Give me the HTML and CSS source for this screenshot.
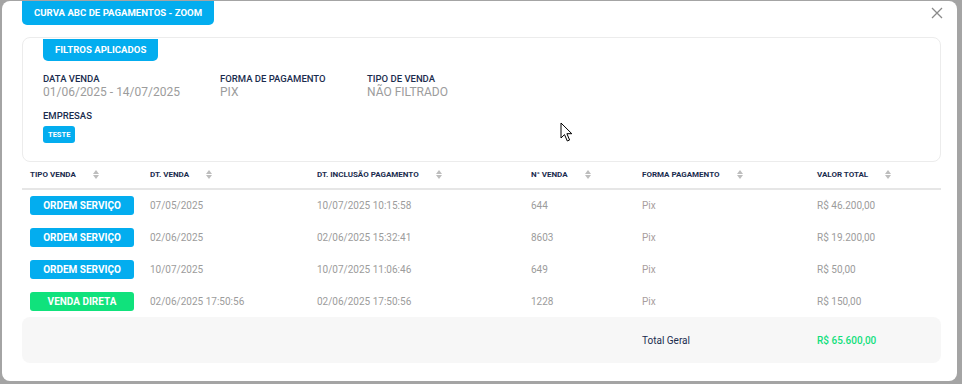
FILE: index.html
```html
<!DOCTYPE html>
<html lang="pt-BR">
<head>
    <meta charset="UTF-8">
    <meta name="viewport" content="width=device-width, initial-scale=1.0">
    <title>Curva ABC de Pagamentos - Zoom</title>
    <link rel="stylesheet" href="styles.css">
</head>
<body>
    <div class="modal">
        <div class="modal-tab">CURVA ABC DE PAGAMENTOS - ZOOM</div>
        <button class="close-btn" aria-label="Fechar">
            <svg width="12" height="12" viewBox="0 0 12 12"><path d="M1 1L11 11M11 1L1 11" stroke="#8a8a8a" stroke-width="1.3"/></svg>
        </button>

        <div class="filters">
            <div class="filters-tab">FILTROS APLICADOS</div>
            <div class="filter-row">
                <div class="filter">
                    <div class="filter-label">DATA VENDA</div>
                    <div class="filter-value">01/06/2025 - 14/07/2025</div>
                </div>
                <div class="filter">
                    <div class="filter-label">FORMA DE PAGAMENTO</div>
                    <div class="filter-value">PIX</div>
                </div>
                <div class="filter">
                    <div class="filter-label">TIPO DE VENDA</div>
                    <div class="filter-value">NÃO FILTRADO</div>
                </div>
            </div>
            <div class="filter">
                <div class="filter-label">EMPRESAS</div>
                <span class="chip">TESTE</span>
            </div>
        </div>

        <table class="grid">
            <colgroup>
                <col style="width:120px">
                <col style="width:167px">
                <col style="width:214px">
                <col style="width:111px">
                <col style="width:175px">
                <col style="width:132px">
            </colgroup>
            <thead>
                <tr>
                    <th>TIPO VENDA<span class="sort"></span></th>
                    <th>DT. VENDA<span class="sort"></span></th>
                    <th>DT. INCLUSÃO PAGAMENTO<span class="sort"></span></th>
                    <th>N° VENDA<span class="sort"></span></th>
                    <th>FORMA PAGAMENTO<span class="sort"></span></th>
                    <th>VALOR TOTAL<span class="sort"></span></th>
                </tr>
            </thead>
            <tbody>
                <tr>
                    <td><span class="badge badge-os">ORDEM SERVIÇO</span></td>
                    <td>07/05/2025</td>
                    <td>10/07/2025 10:15:58</td>
                    <td>644</td>
                    <td class="pix">Pix</td>
                    <td>R$ 46.200,00</td>
                </tr>
                <tr>
                    <td><span class="badge badge-os">ORDEM SERVIÇO</span></td>
                    <td>02/06/2025</td>
                    <td>02/06/2025 15:32:41</td>
                    <td>8603</td>
                    <td class="pix">Pix</td>
                    <td>R$ 19.200,00</td>
                </tr>
                <tr>
                    <td><span class="badge badge-os">ORDEM SERVIÇO</span></td>
                    <td>10/07/2025</td>
                    <td>10/07/2025 11:06:46</td>
                    <td>649</td>
                    <td class="pix">Pix</td>
                    <td>R$ 50,00</td>
                </tr>
                <tr>
                    <td><span class="badge badge-vd">VENDA DIRETA</span></td>
                    <td>02/06/2025 17:50:56</td>
                    <td>02/06/2025 17:50:56</td>
                    <td>1228</td>
                    <td class="pix">Pix</td>
                    <td>R$ 150,00</td>
                </tr>
            </tbody>
            <tfoot>
                <tr>
                    <td></td>
                    <td></td>
                    <td></td>
                    <td></td>
                    <td class="total-label">Total Geral</td>
                    <td class="total-value">R$ 65.600,00</td>
                </tr>
            </tfoot>
        </table>

        <svg class="cursor" width="14" height="21" viewBox="0 0 14 21">
            <path d="M1 1L1 16L4.5 12.6L7.3 19L9.6 18L6.9 11.7L11.8 11.7Z" fill="#fff" stroke="#000" stroke-width="1" stroke-linejoin="round"/>
        </svg>
    </div>
</body>
</html>
```

FILE: styles.css
```css
body {
    margin: 0;
    background: #a4a4a4;
    font-family: Roboto, "Liberation Sans", sans-serif;
    height: 384px;
    overflow: hidden;
}
.modal {
    position: relative;
    margin: 1px 5px 0 2px;
    height: 380px;
    background: #ffffff;
    border-radius: 8px;
    padding: 0 16px 0 20px;
    box-sizing: border-box;
}
.modal-tab {
    display: inline-block;
    background: #03adef;
    color: #ffffff;
    font-size: 9.6px;
    font-weight: 700;
    padding: 0 12px;
    height: 24px;
    line-height: 24px;
    border-radius: 0 0 5px 5px;
}
.close-btn {
    position: absolute;
    top: 6px;
    right: 14px;
    background: none;
    border: none;
    padding: 0;
    cursor: pointer;
}
.filters {
    margin-top: 12px;
    border: 1px solid #ececec;
    border-radius: 8px;
    height: 125px;
    box-sizing: border-box;
    padding: 0 20px;
}
.filters-tab {
    display: inline-block;
    background: #03adef;
    color: #ffffff;
    font-size: 9.6px;
    font-weight: 700;
    padding: 0 12px;
    height: 22px;
    line-height: 22px;
    border-radius: 0 0 5px 5px;
}
.filter-row {
    display: flex;
    margin-top: 12px;
    margin-bottom: 11px;
}
.filter-row .filter:nth-child(1) { width: 177px; }
.filter-row .filter:nth-child(2) { width: 147px; }
.filter-label {
    font-size: 9.5px;
    font-weight: 500;
    color: #1a2c4e;
    line-height: 12px;
}
.filter-value {
    font-size: 12px;
    color: #9c9c9c;
    line-height: 14px;
}
.chip {
    display: inline-block;
    margin-top: 1px;
    background: #03adef;
    color: #ffffff;
    font-size: 7.5px;
    font-weight: 700;
    padding: 0 5px;
    height: 17px;
    line-height: 17px;
    border-radius: 3px;
}
.grid {
    width: 919px;
    border-collapse: collapse;
    table-layout: fixed;
    font-size: 10px;
}
.grid th {
    text-align: left;
    font-size: 8px;
    font-weight: 700;
    color: #1a2c4e;
    height: 27px;
    padding: 0 8px;
    border-bottom: 2px solid #e6e6e6;
    box-sizing: border-box;
}
.sort {
    display: inline-block;
    vertical-align: middle;
    margin-left: 17px;
    width: 0;
    height: 9px;
    position: relative;
    top: -1px;
}
.sort::before,
.sort::after {
    content: "";
    position: absolute;
    left: 0;
    border-left: 3px solid transparent;
    border-right: 3px solid transparent;
}
.sort::before {
    top: 0;
    border-bottom: 4px solid #bdbdbd;
}
.sort::after {
    bottom: 0;
    border-top: 4px solid #bdbdbd;
}
.grid td {
    padding: 0 8px;
    height: 31.75px;
    color: #9c9c9c;
    white-space: nowrap;
}
.grid td.pix {
    color: #a89d9d;
}
.badge {
    display: block;
    height: 19px;
    line-height: 19px;
    text-align: center;
    color: #ffffff;
    font-weight: 700;
    font-size: 10px;
    border-radius: 3px;
}
.badge-os {
    background: #03adef;
}
.badge-vd {
    background: #10e27c;
}
.grid tfoot td {
    background: #f7f7f7;
    height: 46px;
}
.grid tfoot td:first-child {
    border-radius: 8px 0 0 8px;
}
.grid tfoot td:last-child {
    border-radius: 0 8px 8px 0;
}
.grid td.total-label {
    color: #1a2c4e;
}
.grid td.total-value {
    color: #12df7c;
    font-weight: 500;
}
.cursor {
    position: absolute;
    left: 558px;
    top: 121px;
}
```
